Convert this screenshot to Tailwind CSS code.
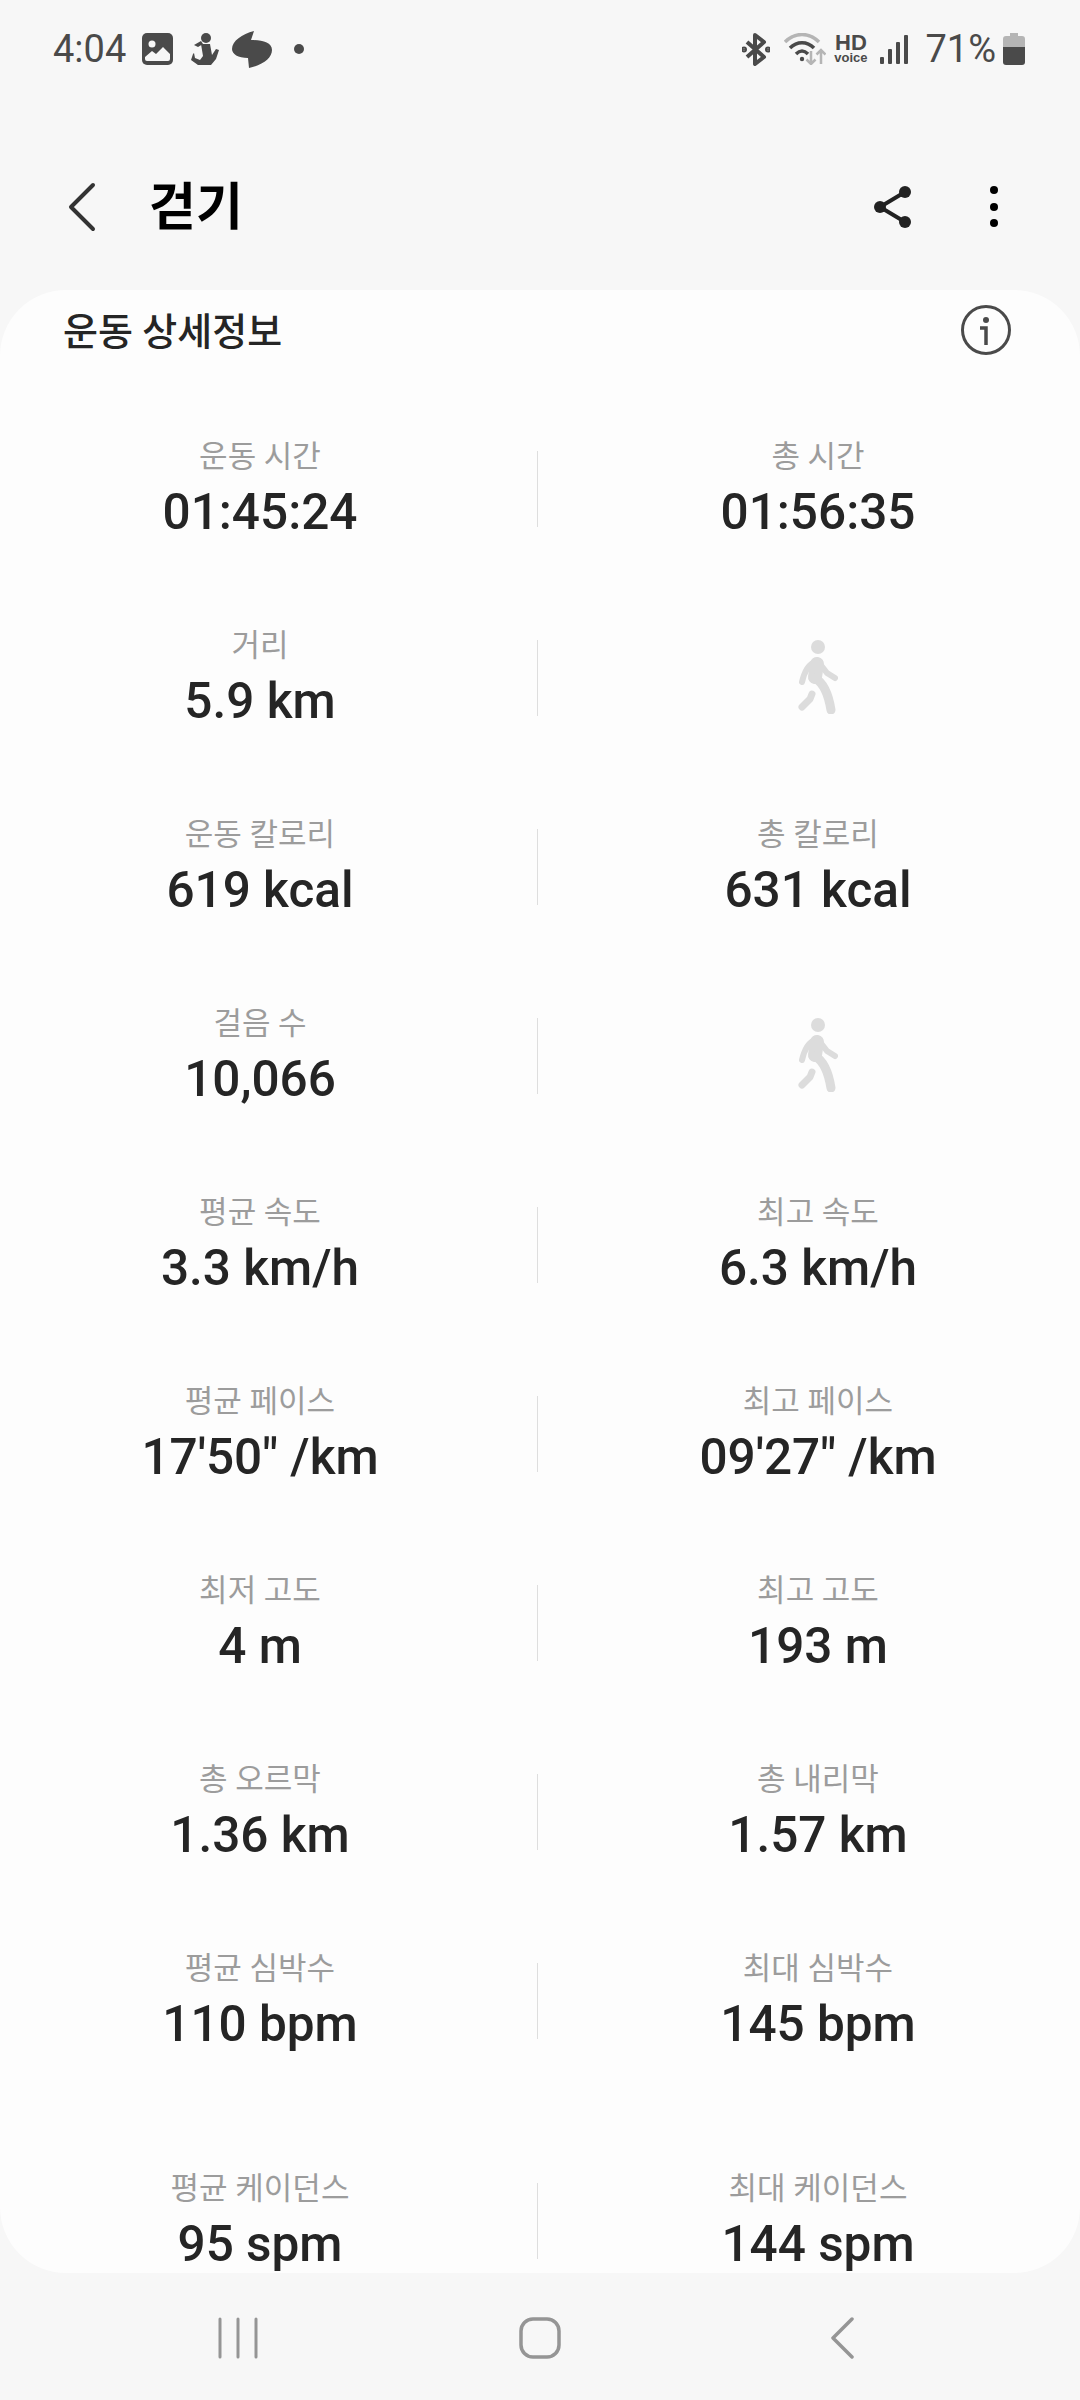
<!DOCTYPE html>
<html lang="ko">
<head>
  <meta charset="UTF-8">
  <meta name="viewport" content="width=device-width, initial-scale=1.0">
  <title>걷기</title>
  <script src="https://cdn.jsdelivr.net/npm/@tailwindcss/browser@4"></script>
</head>
<body class="bg-[#f7f7f7] font-['Roboto','Noto_Sans_CJK_KR',sans-serif]">
  <div class="w-[1080px] h-[2400px] overflow-hidden flex flex-col">

    <!-- Status bar -->
    <div class="h-[98px] shrink-0 flex items-center justify-between pl-[53px] pr-[55px] text-[#4a4a4a]">
      <div class="flex items-center">
        <span class="text-[38px] leading-none">4:04</span>
        <svg class="ml-[16px]" width="31" height="32" viewBox="0 0 31 32"><rect width="31" height="32" rx="5" fill="#4a4a4a"/><circle cx="10" cy="11" r="3.500" fill="#f7f7f7"/><path d="M3 24l7-6 4 3 7-7 7 7v5a2 2 0 0 1-2 2H5a2 2 0 0 1-2-2z" fill="#f7f7f7"/></svg>
        <svg class="ml-[18px]" width="28" height="32" viewBox="0 0 28 32" fill="#4a4a4a"><circle cx="15" cy="5" r="5"/><path d="M3 12l7-4 2 3-5 3zM10 11h9l2 11 4-6 3 1-3 9-5 6H7l-7-5 2-6 1-1 1 5 5 2 3-4z"/></svg>
        <svg class="ml-[13px]" width="40" height="37" viewBox="0 0 40 37" fill="#4a4a4a"><path d="M22 0l-3 9c11 0 21 2 21 10 0 8-9 15-23 18l-1-10C6 27 0 23 0 18 0 10 10 3 22 0z"/></svg>
        <span class="ml-[22px] w-[10px] h-[10px] rounded-full bg-[#4a4a4a]"></span>
      </div>
      <div class="flex items-center">
        <svg width="28" height="33" viewBox="0 0 28 33" fill="none" stroke="#4a4a4a" stroke-width="4" stroke-linejoin="round"><path d="M5 9l17 15-9 7V2l9 7L5 24"/><circle cx="2" cy="16.500" r="1" fill="#4a4a4a"/><circle cx="26" cy="16.500" r="1" fill="#4a4a4a"/></svg>
        <svg class="ml-[14px]" width="42" height="32" viewBox="0 0 42 32" fill="none"><path d="M1 9C11-1 25-1 35 9" stroke="#b5b5b5" stroke-width="3.500"/><path d="M6 15c7-7 17-7 24 0M12 21c4-4 8-4 12 0" stroke="#4a4a4a" stroke-width="3.500"/><circle cx="18" cy="26" r="2.200" fill="#4a4a4a"/><path d="M27 18v13m-4.500-4.500L27 31l4.500-4.500M37 31V17m-4.500 4.500L37 17l4.500 4.500" stroke="#b5b5b5" stroke-width="2.500"/></svg>
        <div class="ml-[8px] w-[33px] flex flex-col items-center font-['Liberation_Sans',sans-serif] font-bold leading-none">
          <span class="text-[22px] h-[16px] leading-[16px]">HD</span>
          <span class="text-[13px] leading-[12px] mt-[1px]">voice</span>
        </div>
        <svg class="ml-[13px]" width="28" height="29" viewBox="0 0 28 29" fill="#4a4a4a"><rect x="0" y="22" width="4" height="7" rx="1"/><rect x="8" y="14" width="4" height="15" rx="1"/><rect x="16" y="7" width="4" height="22" rx="1"/><rect x="24" y="0" width="4" height="29" rx="1"/></svg>
        <span class="ml-[17px] text-[38px] leading-none">71%</span>
        <svg class="ml-[7px]" width="22" height="32" viewBox="0 0 22 32"><path d="M7 0h8v3h4a3 3 0 0 1 3 3v8H0V6a3 3 0 0 1 3-3h4z" fill="#b5b5b5"/><path d="M0 14h22v15a3 3 0 0 1-3 3H3a3 3 0 0 1-3-3z" fill="#4a4a4a"/></svg>
      </div>
    </div>

    <!-- Title bar -->
    <div class="h-[192px] shrink-0 flex items-center pt-[26px]">
      <svg class="ml-[68px]" width="28" height="50" viewBox="0 0 28 50" fill="none" stroke="#333" stroke-width="4" stroke-linecap="round" stroke-linejoin="round"><path d="M25 3L3 25l22 22"/></svg>
      <h1 class="ml-[53px] text-[51px] leading-none font-bold text-black">걷기</h1>
      <svg class="ml-auto" width="38" height="44" viewBox="0 0 38 44" fill="#222"><circle cx="31" cy="7" r="6"/><circle cx="6" cy="22" r="6"/><circle cx="31" cy="37" r="6"/><path d="M31 7L6 22l25 15" fill="none" stroke="#222" stroke-width="4"/></svg>
      <svg class="ml-[78px] mr-[82px]" width="8" height="42" viewBox="0 0 8 42" fill="#000"><circle cx="4" cy="4" r="4"/><circle cx="4" cy="21" r="4"/><circle cx="4" cy="37" r="4"/></svg>
    </div>

    <!-- Detail card -->
    <div class="bg-[#fdfdfd] rounded-[66px] h-[1983px] shrink-0 overflow-hidden">
      <div class="h-[80px] flex items-center justify-between pl-[63px] pr-[69px]">
        <h2 class="text-[38px] leading-none font-medium text-[#252525] pt-[4px]">운동 상세정보</h2>
        <svg width="50" height="50" viewBox="0 0 50 50" fill="none" stroke="#4a4a4a"><circle cx="25" cy="25" r="23.500" stroke-width="3"/><circle cx="25" cy="15" r="3" fill="#4a4a4a" stroke="none"/><path d="M19 23h6v17" stroke-width="3.500"/></svg>
      </div>
      <div id="rows" class="mt-[25px] flex flex-col"></div>
    </div>

    <!-- Nav bar -->
    <div class="flex-1 flex items-center justify-center pt-[2px]">
      <div class="w-[302px] flex justify-center">
        <svg width="40" height="42" viewBox="0 0 40 42" fill="none" stroke="#959595" stroke-width="3" stroke-linecap="round"><path d="M2 2v38M20 2v38M38 2v38"/></svg>
      </div>
      <div class="w-[302px] flex justify-center">
        <svg width="42" height="42" viewBox="0 0 42 42" fill="none" stroke="#959595" stroke-width="3.500"><rect x="2" y="2" width="38" height="38" rx="12"/></svg>
      </div>
      <div class="w-[302px] flex justify-center">
        <svg width="24" height="42" viewBox="0 0 24 42" fill="none" stroke="#959595" stroke-width="3.500" stroke-linecap="round" stroke-linejoin="round"><path d="M22 2L3 21l19 19"/></svg>
      </div>
    </div>
  </div>

  <script>
    // Workout stats, left and right column per row. null draws the walking figure
    const stats = [
      [["운동 시간", "01:45:24"], ["총 시간", "01:56:35"]],
      [["거리", "5.9 km"], null],
      [["운동 칼로리", "619 kcal"], ["총 칼로리", "631 kcal"]],
      [["걸음 수", "10,066"], null],
      [["평균 속도", "3.3 km/h"], ["최고 속도", "6.3 km/h"]],
      [["평균 페이스", "17'50\" /km"], ["최고 페이스", "09'27\" /km"]],
      [["최저 고도", "4 m"], ["최고 고도", "193 m"]],
      [["총 오르막", "1.36 km"], ["총 내리막", "1.57 km"]],
      [["평균 심박수", "110 bpm"], ["최대 심박수", "145 bpm"]],
      [["평균 케이던스", "95 spm"], ["최대 케이던스", "144 spm"]]
    ];

    const walker = `
      <svg class="mt-[56px]" width="40" height="74" viewBox="0 0 40 74" fill="none" stroke="#dcdcdc" stroke-linecap="round" stroke-linejoin="round">
        <circle cx="20" cy="7" r="7" fill="#dcdcdc" stroke="none"/>
        <path d="M19 24L17 37" stroke-width="14"/>
        <path d="M17 38Q29 45 33 70" stroke-width="9"/>
        <path d="M17 22Q8 25 4 42" stroke-width="6"/>
        <path d="M22 24L29 33L37 38" stroke-width="6"/>
        <path d="M14 54L12 59L4 67" stroke-width="7"/>
      </svg>`;

    function cell(stat) {
      if (!stat) return `<div class="flex flex-col items-center">${walker}</div>`;
      return `
        <div class="flex flex-col items-center pt-[42px]">
          <span class="text-[31px] leading-[40px] text-[#9c9c9c]">${stat[0]}</span>
          <span class="text-[49.5px] leading-[56px] mt-[7px] font-medium text-[#252525]">${stat[1]}</span>
        </div>`;
    }

    document.getElementById("rows").innerHTML = stats.map((row, index) => `
      <div class="${index === 9 ? "h-[189px] mt-[31px]" : "h-[189px]"} shrink-0 grid grid-cols-[520px_36px_524px]">
        ${cell(row[0])}
        <div><span class="block w-px h-[76px] mt-[56px] ml-[17px] bg-[#dedede]"></span></div>
        ${cell(row[1])}
      </div>`).join("");
  </script>
</body>
</html>
